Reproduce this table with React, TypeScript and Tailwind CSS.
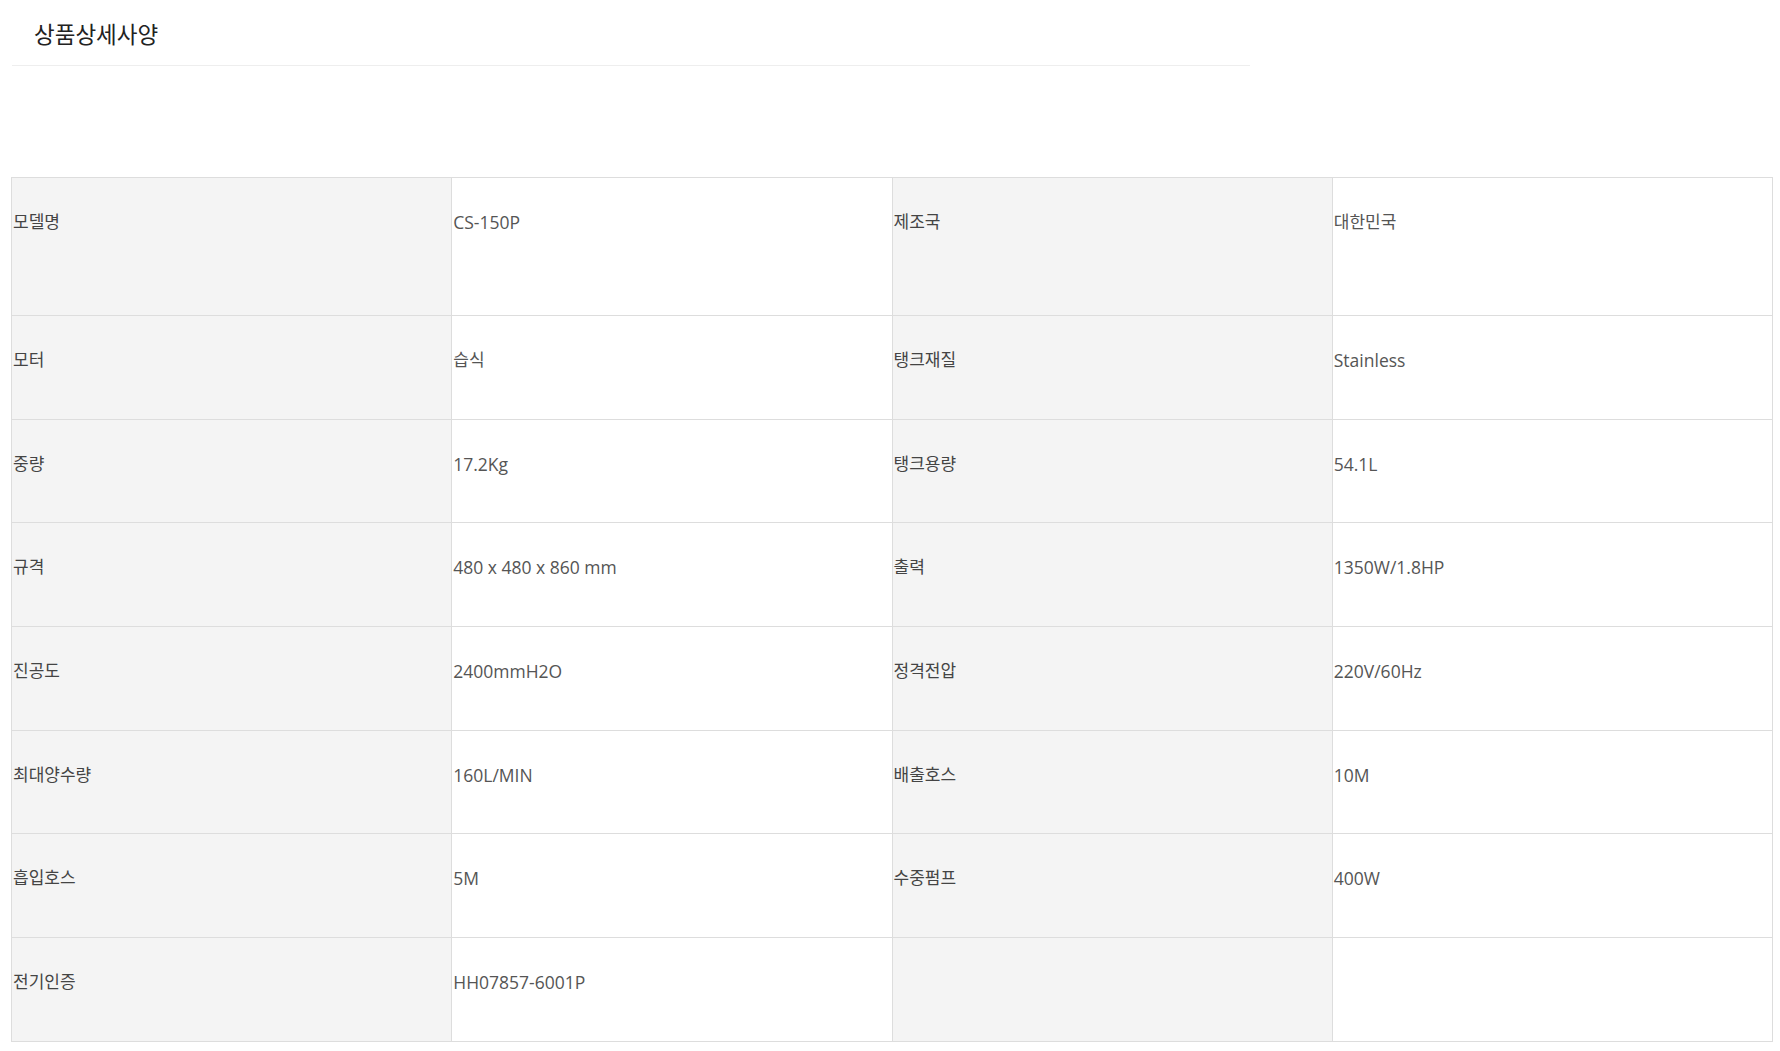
import React from "react";

type SpecRow = [string, string, string, string];

const specs: SpecRow[] = [
  ["모델명", "CS-150P", "제조국", "대한민국"],
  ["모터", "습식", "탱크재질", "Stainless"],
  ["중량", "17.2Kg", "탱크용량", "54.1L"],
  ["규격", "480 x 480 x 860 mm", "출력", "1350W/1.8HP"],
  ["진공도", "2400mmH2O", "정격전압", "220V/60Hz"],
  ["최대양수량", "160L/MIN", "배출호스", "10M"],
  ["흡입호스", "5M", "수중펌프", "400W"],
  ["전기인증", "HH07857-6001P", "", ""],
];

const isKorean = (text: string) => /[\uac00-\ud7a3]/.test(text);

const SpecCell: React.FC<{ text: string; label?: boolean }> = ({ text, label }) => {
  const bg = label ? "bg-[#f4f4f4] text-[#444]" : "bg-white text-[#555]";
  const size = isKorean(text) ? "text-[17px]" : "text-[17.5px]";
  return (
    <td className={`border border-[#dddddd] align-top p-0 pl-[1px] pt-[32px] leading-[24px] ${bg} ${size}`}>
      {text}
    </td>
  );
};

const App: React.FC = () => {
  return (
    <div
      className="min-h-[1051px] w-[1780px] bg-white"
      style={{ fontFamily: '"Open Sans", "Noto Sans CJK KR", sans-serif' }}
    >
      <div className="ml-[12px] w-[1238px] h-[66px] border-b border-[#eeeeee] pl-[22px] pt-[18px]">
        <h2
          className="text-[22.5px] leading-[30px] text-[#222] font-normal"
          style={{ fontFamily: '"Noto Sans CJK KR", sans-serif' }}
        >
          상품상세사양
        </h2>
      </div>

      <table className="mt-[111px] ml-[11px] w-[1762px] table-fixed border-collapse">
        <tbody>
          {specs.map((row, index) => (
            <tr key={row[0]} className={index === 0 ? "h-[138px]" : "h-[103.7px]"}>
              <SpecCell text={row[0]} label />
              <SpecCell text={row[1]} />
              <SpecCell text={row[2]} label />
              <SpecCell text={row[3]} />
            </tr>
          ))}
        </tbody>
      </table>
    </div>
  );
};

export default App;
